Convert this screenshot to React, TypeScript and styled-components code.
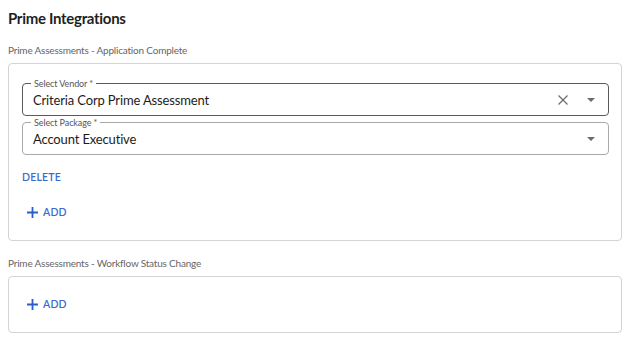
import styled, { createGlobalStyle } from "styled-components";

const GlobalStyle = createGlobalStyle`
body{
    margin:0;
    background:#ffffff;
    font-family: "Lato", "Noto Sans", sans-serif;
}
`;

const Page = styled.div`
padding: 8px 6px 0 8px;
width: 614px;
`;

const Title = styled.h1`
margin: 0;
font-size: 15px;
line-height: 20px;
font-weight: 700;
letter-spacing: -0.3px;
color: #1f1f1f;
`;

const SectionLabel = styled.div`
margin-top: 15px;
font-size: 10px;
line-height: 14px;
letter-spacing: -0.2px;
color: #666666;
`;

const Card = styled.div<{ $pad: string }>`
margin-top: 6px;
border: 1px solid #d4d4d4;
border-radius: 4px;
padding: ${props => props.$pad};
display: flex;
flex-direction: column;
align-items: flex-start;
`;

const Field = styled.div<{ $strong?: boolean }>`
position: relative;
box-sizing: border-box;
width: 100%;
height: 33px;
padding: 0 13px 0 10px;
border: 1px solid ${props => props.$strong ? "#5a5a5a" : "#a9a9a9"};
border-radius: 4px;
display: flex;
align-items: center;
& + & {
    margin-top: 6px;
}
`;

const FloatLabel = styled.span`
position: absolute;
top: -6px;
left: 8px;
padding: 0 3px;
background: #ffffff;
font-size: 9px;
line-height: 11px;
letter-spacing: -0.1px;
color: #555555;
`;

const Value = styled.span`
flex: 1;
font-size: 13px;
letter-spacing: -0.15px;
color: #1c1c1c;
`;

const Icons = styled.span`
display: flex;
align-items: center;
gap: 19px;
color: #6b6b6b;
`;

const TextButton = styled.button<{ $top: number; $icon?: boolean }>`
box-sizing: border-box;
height: 14px;
margin-top: ${props => props.$top}px;
padding: 0 0 0 ${props => props.$icon ? 5 : 0}px;
border: none;
background: none;
display: flex;
align-items: center;
gap: 5px;
font-family: inherit;
font-size: 10.5px;
font-weight: 600;
letter-spacing: 0.2px;
line-height: 14px;
color: #3b6bd1;
`;

const Clear = () => (
    <svg width="10" height="10" viewBox="0 0 10 10">
        <path d="M0.5 0.5L9.5 9.5M9.5 0.5L0.5 9.5" stroke="currentColor" strokeWidth="1.2" fill="none" />
    </svg>
);

const Caret = () => (
    <svg width="8" height="4" viewBox="0 0 8 4">
        <path d="M0 0H8L4 4Z" fill="currentColor" />
    </svg>
);

const Plus = () => (
    <svg width="11" height="11" viewBox="0 0 11 11">
        <path d="M5.5 0V11M0 5.5H11" stroke="#2c5cc9" strokeWidth="1.8" fill="none" />
    </svg>
);

function App() {
    return (
        <Page>
            <GlobalStyle />
            <Title>Prime Integrations</Title>
            <SectionLabel>Prime Assessments - Application Complete</SectionLabel>
            <Card $pad="19px 12px 21px 13px">
                <Field $strong>
                    <FloatLabel>Select Vendor *</FloatLabel>
                    <Value>Criteria Corp Prime Assessment</Value>
                    <Icons><Clear /><Caret /></Icons>
                </Field>
                <Field>
                    <FloatLabel>Select Package *</FloatLabel>
                    <Value>Account Executive</Value>
                    <Icons><Caret /></Icons>
                </Field>
                <TextButton $top={15}>DELETE</TextButton>
                <TextButton $top={21} $icon><Plus />ADD</TextButton>
            </Card>
            <SectionLabel>Prime Assessments - Workflow Status Change</SectionLabel>
            <Card $pad="20px 12px 21px 13px">
                <TextButton $top={0} $icon><Plus />ADD</TextButton>
            </Card>
        </Page>
    );
}

export default App;
